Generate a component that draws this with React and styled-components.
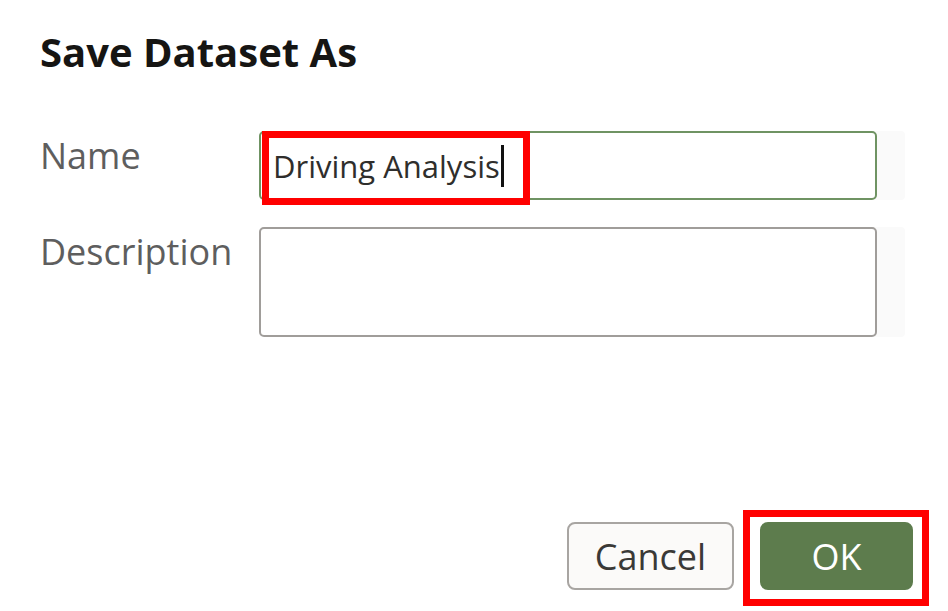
import React from 'react';
import styled, { createGlobalStyle } from 'styled-components';

const GlobalStyle = createGlobalStyle`
    body {
        margin: 0;
        background: #ffffff;
        font-family: "Open Sans", "Noto Sans", sans-serif;
    }
`;

const Dialog = styled.div`
    width: 948px;
    height: 611px;
    box-sizing: border-box;
    padding: 27px 35px 0 40px;
    display: flex;
    flex-direction: column;
    background: #ffffff;
`;

const Title = styled.h1`
    margin: 0;
    font-size: 40px;
    font-weight: 700;
    line-height: 49px;
    color: #161513;
`;

const Form = styled.div`
    margin-top: 55px;
    display: flex;
    flex-direction: column;
    gap: 27px;
`;

const Row = styled.div`
    display: flex;
    align-items: flex-start;
`;

const Label = styled.label`
    width: 219px;
    font-size: 36px;
    line-height: 49px;
    color: #5e5e5e;
`;

const FieldBack = styled.div`
    position: relative;
    width: 646px;
    height: ${p => p.$height}px;
    background: #fafafa;
    border-radius: 4px;
`;

const Field = styled.div`
    box-sizing: border-box;
    width: 618px;
    height: 100%;
    display: flex;
    align-items: center;
    padding-left: 12px;
    background: #ffffff;
    border: 2px solid ${p => (p.$active ? '#6f9363' : '#a09d9a')};
    border-radius: 5px;
    font-size: 31px;
    color: #2f2e2c;
`;

const Caret = styled.span`
    display: inline-block;
    width: 3px;
    height: 42px;
    margin-left: 1px;
    background: #111111;
`;

const Footer = styled.div`
    margin-top: auto;
    margin-bottom: 21px;
    display: flex;
    justify-content: flex-end;
    gap: 26px;
`;

const ButtonWrap = styled.div`
    position: relative;
`;

const Button = styled.button`
    box-sizing: border-box;
    height: 68px;
    width: ${p => p.$width}px;
    border-radius: 8px;
    font-family: "Open Sans", "Noto Sans", sans-serif;
    font-size: 36px;
    border: 2px solid ${p => (p.$primary ? '#5d7c4d' : '#a8a5a2')};
    background: ${p => (p.$primary ? '#5d7c4d' : '#fbfaf9')};
    color: ${p => (p.$primary ? '#ffffff' : '#3a3937')};
    padding: 0;
`;

const Highlight = styled.div`
    position: absolute;
    box-sizing: border-box;
    border: 7px solid #ff0000;
    pointer-events: none;
`;

export default function App() {
    return (
        <>
            <GlobalStyle />
            <Dialog>
                <Title>Save Dataset As</Title>
                <Form>
                    <Row>
                        <Label>Name</Label>
                        <FieldBack $height={69}>
                            <Field $active>
                                Driving Analysis<Caret />
                            </Field>
                            <Highlight style={{ left: 3, top: 0, width: 268, height: 74 }} />
                        </FieldBack>
                    </Row>
                    <Row>
                        <Label>Description</Label>
                        <FieldBack $height={110}>
                            <Field />
                        </FieldBack>
                    </Row>
                </Form>
                <Footer>
                    <Button $width={167}>Cancel</Button>
                    <ButtonWrap>
                        <Button $primary $width={153}>OK</Button>
                        <Highlight style={{ left: -17, top: -12, width: 186, height: 96 }} />
                    </ButtonWrap>
                </Footer>
            </Dialog>
        </>
    );
}
